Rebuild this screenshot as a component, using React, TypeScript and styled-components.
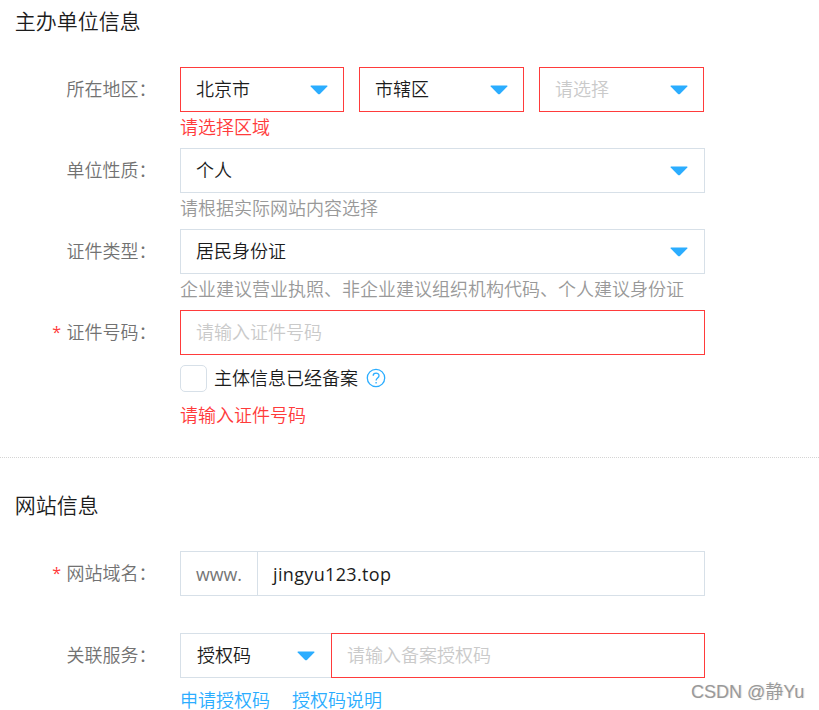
import React from "react";
import styled, { createGlobalStyle } from "styled-components";

const BLUE = "#2badff";
const RED = "#ff3b3b";
const LINE = "#d7e0e8";

const GlobalStyle = createGlobalStyle`
  *, *::before, *::after { box-sizing: border-box; }
  body {
    margin: 0;
    background: #fff;
    color: #1c1c1c;
    font-family: "Open Sans", "Noto Sans CJK SC", sans-serif;
    font-size: 18px;
    font-weight: 350;
    line-height: 24px;
  }
`;

const Page = styled.main`
  position: relative;
  width: 819px;
  height: 710px;
  overflow: hidden;
  white-space: nowrap;
`;

const Section = styled.section<{ $height: number; $divided?: boolean }>`
  height: ${(p) => p.$height}px;
  border-bottom: ${(p) => (p.$divided ? "1px dotted #d4d4d4" : "0")};
`;

const Title = styled.h2<{ $top: number }>`
  margin: 0;
  padding: ${(p) => p.$top}px 0 0 14.8px;
  font-size: 21px;
  font-weight: 350;
  line-height: 30px;
`;

const Row = styled.div<{ $gap?: number }>`
  display: flex;
  margin-top: ${(p) => p.$gap ?? 0}px;
`;

const Label = styled.label`
  display: flex;
  justify-content: flex-end;
  width: 156.5px;
  margin-right: 23.5px;
  line-height: 45px;
  color: #727272;
`;

const Required = styled.span`
  margin-right: 5.5px;
  color: ${RED};
  font-size: 16px;
  font-weight: 400;
`;

const Field = styled.div`
  width: 525px;
`;

const Controls = styled.div<{ $gap?: number }>`
  display: flex;
  gap: ${(p) => p.$gap ?? 0}px;
`;

const Box = styled.div<{ $width?: number; $error?: boolean; $joined?: boolean }>`
  display: flex;
  align-items: center;
  justify-content: space-between;
  width: ${(p) => (p.$width ? `${p.$width}px` : "auto")};
  flex: ${(p) => (p.$width ? "none" : "1")};
  height: 45px;
  padding: 0 ${(p) => (p.$width === 164 || p.$width === 165 ? 15 : 16)}px 0 ${(p) => (p.$width === 151 ? 16 : 15)}px;
  border: 1px solid ${(p) => (p.$error ? RED : LINE)};
  ${(p) => p.$joined && "border-right: 0;"}
`;

const Value = styled.span`
  padding-bottom: 2px;
`;

const Placeholder = styled(Value)`
  color: #cacaca;
`;

const Prefix = styled.span`
  color: #757575;
  font-weight: 400;
  font-size: 17.8px;
`;

const Domain = styled.span`
  font-weight: 400;
  font-size: 18px;
  letter-spacing: 0.35px;
`;

const Arrow = styled.svg`
  display: block;
  width: 18px;
  height: 10px;
  margin-top: 1px;
  fill: ${BLUE};
`;

const Message = styled.p<{ $error?: boolean }>`
  margin: 0;
  height: 36px;
  padding-top: 3px;
  color: ${(p) => (p.$error ? RED : "#999")};
`;

const CheckLine = styled.div`
  display: flex;
  align-items: center;
  height: 27px;
  margin: 10px 0 8px;
`;

const Checkbox = styled.span`
  width: 27px;
  height: 27px;
  margin-right: 7px;
  border: 1px solid ${LINE};
  border-radius: 5px;
`;

const HelpIcon = styled.svg`
  width: 20px;
  height: 20px;
  margin: -1px 0 0 8px;
  fill: none;
  stroke: ${BLUE};
  stroke-width: 1.3;
`;

const Links = styled.div`
  display: flex;
  gap: 22px;
  padding-top: 12px;
  line-height: 20px;
`;

const Link = styled.a`
  color: ${BLUE};
`;

const Watermark = styled.span`
  position: absolute;
  left: 691px;
  top: 680px;
  color: #999;
  font-family: "Liberation Sans", "Noto Sans CJK SC", sans-serif;
  font-size: 18px;
  text-shadow: 1px 0 1px #ddd;
`;

function SelectBox({ value, placeholder, ...box }: {
  value?: string;
  placeholder?: string;
  $width?: number;
  $error?: boolean;
  $joined?: boolean;
}) {
  return (
    <Box {...box}>
      {value ? <Value>{value}</Value> : <Placeholder>{placeholder}</Placeholder>}
      <Arrow viewBox="0 0 18 10">
        <path d="M.7 .4h16.6v1.2L10.2 8.8Q9 9.9 7.8 8.8L.7 1.6Z" />
      </Arrow>
    </Box>
  );
}

function FormRow({ label, required, gap, children }: {
  label: string;
  required?: boolean;
  gap?: number;
  children: React.ReactNode;
}) {
  return (
    <Row $gap={gap}>
      <Label>
        {required && <Required>*</Required>}
        {label}：
      </Label>
      <Field>{children}</Field>
    </Row>
  );
}

export default function App() {
  return (
    <Page>
      <GlobalStyle />
      <Section $height={458} $divided>
        <Title $top={6}>主办单位信息</Title>
        <FormRow label="所在地区" gap={31}>
          <Controls $gap={15}>
            <SelectBox value="北京市" $width={164} $error />
            <SelectBox value="市辖区" $width={165} $error />
            <SelectBox placeholder="请选择" $width={165} $error />
          </Controls>
          <Message $error>请选择区域</Message>
        </FormRow>
        <FormRow label="单位性质">
          <SelectBox value="个人" $width={525} />
          <Message>请根据实际网站内容选择</Message>
        </FormRow>
        <FormRow label="证件类型">
          <SelectBox value="居民身份证" $width={525} />
          <Message>企业建议营业执照、非企业建议组织机构代码、个人建议身份证</Message>
        </FormRow>
        <FormRow label="证件号码" required>
          <Box $width={525} $error>
            <Placeholder>请输入证件号码</Placeholder>
          </Box>
          <CheckLine>
            <Checkbox />
            <Value>主体信息已经备案</Value>
            <HelpIcon viewBox="0 0 20 20">
              <circle cx="10" cy="10" r="8.7" />
              <path d="M7.2 7.8c0-3.5 5.8-3.4 5.8-.1 0 2.2-2.9 2.3-2.9 4.7M10.1 14v1.6" />
            </HelpIcon>
          </CheckLine>
          <Message $error>请输入证件号码</Message>
        </FormRow>
      </Section>
      <Section $height={252}>
        <Title $top={32}>网站信息</Title>
        <FormRow label="网站域名" required gap={31}>
          <Controls>
            <Box $width={77} $joined>
              <Prefix>www.</Prefix>
            </Box>
            <Box>
              <Domain>jingyu123.top</Domain>
            </Box>
          </Controls>
        </FormRow>
        <FormRow label="关联服务" gap={37}>
          <Controls>
            <SelectBox value="授权码" $width={151} $joined />
            <Box $error>
              <Placeholder>请输入备案授权码</Placeholder>
            </Box>
          </Controls>
          <Links>
            <Link>申请授权码</Link>
            <Link>授权码说明</Link>
          </Links>
        </FormRow>
      </Section>
      <Watermark>CSDN @静Yu</Watermark>
    </Page>
  );
}
